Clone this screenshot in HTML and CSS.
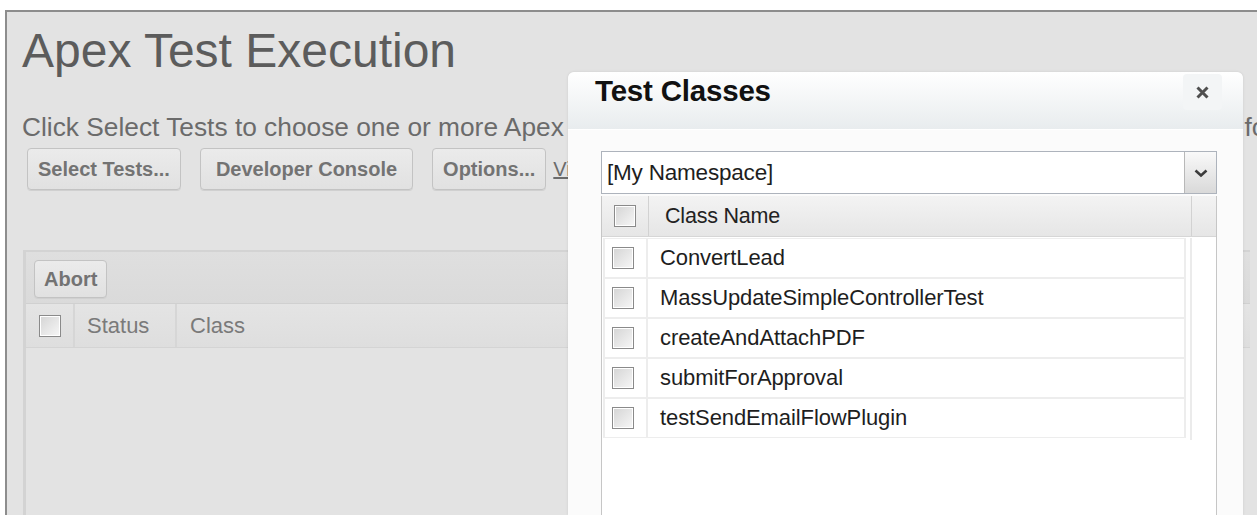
FILE: index.html
```html
<!DOCTYPE html>
<html lang="en">
<head>
<meta charset="utf-8">
<title>Apex Test Execution</title>
<link rel="stylesheet" href="styles.css">
</head>
<body>
  <div class="page">
    <h1 class="title">Apex Test Execution</h1>
    <p class="intro">Click Select Tests to choose one or more Apex unit test classes to run. To see the current code coverage for an individual class, go to the Apex Classes page.</p>
    <div class="actions">
      <button class="btn">Select Tests...</button>
      <button class="btn btn-wide">Developer Console</button>
      <button class="btn">Options...</button>
      <a class="link" href="#">View Test History</a>
    </div>

    <div class="grid">
      <div class="toolbar">
        <button class="btn btn-small">Abort</button>
      </div>
      <div class="grid-head">
        <div class="cell cell-check"><span class="checkbox"></span></div>
        <div class="cell cell-status">Status</div>
        <div class="cell cell-class">Class</div>
      </div>
    </div>
  </div>

  <div class="modal">
    <div class="modal-head">
      <h2 class="modal-title">Test Classes</h2>
      <button class="modal-close" aria-label="Close">
        <svg width="13" height="13" viewBox="0 0 13 13"><path d="M1.5 1.5 L11.5 11.5 M11.5 1.5 L1.5 11.5" stroke="#4f4f4f" stroke-width="3" fill="none"/></svg>
      </button>
    </div>
    <div class="modal-body">
      <div class="select">
        <span class="select-value">[My Namespace]</span>
        <span class="select-arrow">
          <svg width="14" height="10" viewBox="0 0 14 10"><path d="M1.5 2.5 L7 7.5 L12.5 2.5" fill="none" stroke="#3c3c3c" stroke-width="2.6"/></svg>
        </span>
      </div>
      <div class="list">
        <div class="list-head">
          <div class="lh-check"><span class="checkbox"></span></div>
          <div class="lh-name">Class Name</div>
          <div class="lh-gutter"></div>
        </div>
        <div class="list-body">
          <div class="rows">
            <div class="row"><div class="r-check"><span class="checkbox"></span></div><div class="r-name">ConvertLead</div></div>
            <div class="row"><div class="r-check"><span class="checkbox"></span></div><div class="r-name">MassUpdateSimpleControllerTest</div></div>
            <div class="row"><div class="r-check"><span class="checkbox"></span></div><div class="r-name">createAndAttachPDF</div></div>
            <div class="row"><div class="r-check"><span class="checkbox"></span></div><div class="r-name">submitForApproval</div></div>
            <div class="row"><div class="r-check"><span class="checkbox"></span></div><div class="r-name">testSendEmailFlowPlugin</div></div>
          </div>
          <div class="gutter"></div>
        </div>
      </div>
    </div>
  </div>
</body>
</html>
```

FILE: styles.css
```css
html, body {
  margin: 0;
  height: 515px;
  overflow: hidden;
  background: #ffffff;
  font-family: "Liberation Sans", Arial, Helvetica, sans-serif;
}

/* dimmed page behind the dialog */
.page {
  margin: 10px 0 0 5px;
  height: 503px;
  border-top: 2px solid #8d8d8d;
  border-left: 2px solid #8d8d8d;
  background: #e3e3e3;
  padding-left: 15px;
  overflow: hidden;
}

.title {
  margin: 11px 0 0;
  font-size: 48px;
  line-height: 55px;
  font-weight: normal;
  color: #5c5c5c;
}

.intro {
  margin: 34px 0 0;
  font-size: 26.3px;
  line-height: 30px;
  color: #6b6b6b;
  white-space: nowrap;
}

.actions {
  display: flex;
  align-items: center;
  gap: 19px;
  margin: 6px 0 0 5px;
}

.btn {
  height: 42px;
  padding: 0 10px;
  border: 1px solid #c3c3c3;
  border-radius: 4px;
  background: linear-gradient(#ebebeb, #e1e1e1);
  font-family: inherit;
  font-size: 20px;
  font-weight: bold;
  color: #737373;
  box-shadow: 0 1px 0 #d0d0d0;
}

.btn-wide {
  padding: 0 15px;
}

.link {
  margin-left: -12px;
  font-size: 20px;
  color: #6b6b6b;
  white-space: nowrap;
}

.grid {
  margin: 60px 7px 0 1px;
  height: 300px;
  border-top: 2px solid #d3d3d3;
  border-left: 3px solid #d3d3d3;
}

.toolbar {
  height: 52px;
  padding: 8px 0 0 8px;
  box-sizing: border-box;
  background: linear-gradient(#dfdfdf, #dadada);
  border-bottom: 1px solid #d0d0d0;
}

.btn-small {
  height: 38px;
  padding: 0 9px;
}

.grid-head {
  display: flex;
  height: 43px;
  background: linear-gradient(#e4e4e4, #dedede);
  border-bottom: 1px solid #d4d4d4;
  font-size: 22px;
  color: #7a7a7a;
}

.cell {
  display: flex;
  align-items: center;
  border-right: 2px solid #d6d6d6;
}

.cell-check { width: 47px; justify-content: center; }
.cell-status { width: 88px; padding-left: 12px; }
.cell-class { flex: 1; padding-left: 13px; border-right: 0; }

.checkbox {
  display: inline-block;
  width: 22px;
  height: 22px;
  box-sizing: border-box;
  border: 1px solid #8a8a8a;
  box-shadow: inset 0 0 0 1px #ffffff;
  background: linear-gradient(135deg, #d4d4d4, #f7f7f7);
}

/* dialog */
.modal {
  position: absolute;
  left: 568px;
  top: 72px;
  width: 675px;
  height: 443px;
  overflow: hidden;
  border-radius: 6px 6px 0 0;
  background: #fbfbfb;
  box-shadow: 0 0 3px rgba(0, 0, 0, 0.1);
}

.modal-head {
  display: flex;
  align-items: flex-start;
  justify-content: space-between;
  height: 57px;
  padding: 0 21px 0 27px;
  border-radius: 6px 6px 0 0;
  background: linear-gradient(#ffffff, #e8ecee);
  border-bottom: 1px solid #ffffff;
}

.modal-title {
  margin: 3px 0 0;
  font-size: 29.5px;
  line-height: 31px;
  font-weight: bold;
  color: #111111;
  letter-spacing: -0.2px;
}

.modal-close {
  display: flex;
  align-items: center;
  justify-content: center;
  width: 39px;
  height: 36px;
  margin-top: 2px;
  border: 0;
  border-radius: 4px;
  background: #f3f5f6;
  padding: 0;
}

.modal-body {
  padding: 21px 26px 0 33px;
}

.select {
  display: flex;
  height: 43px;
  box-sizing: border-box;
  border: 1px solid #adb3bc;
  background: #ffffff;
}

.select-value {
  flex: 1;
  display: flex;
  align-items: center;
  padding-left: 5px;
  font-size: 22.5px;
  color: #1e1e1e;
  letter-spacing: -0.2px;
}

.select-arrow {
  width: 31px;
  display: flex;
  align-items: center;
  justify-content: center;
  border-left: 1px solid #b8b8b8;
  background: linear-gradient(#f9f9f9, #d9d9d9);
}

.list {
  margin-top: 2px;
  height: 400px;
  border-left: 1px solid #c6c6c6;
  border-right: 1px solid #c6c6c6;
  background: #ffffff;
}

.list-head {
  display: flex;
  height: 40px;
  background: linear-gradient(#f3f3f3, #e6e6e6);
  border-bottom: 1px solid #d6d6d6;
  font-size: 21.5px;
  color: #222222;
  letter-spacing: -0.2px;
}

.lh-check {
  width: 46px;
  display: flex;
  align-items: center;
  justify-content: center;
  border-right: 1px solid #d2d2d2;
}

.lh-name {
  flex: 1;
  display: flex;
  align-items: center;
  padding-left: 16px;
}

.lh-gutter {
  width: 24px;
  border-left: 1px solid #d2d2d2;
}

.list-body {
  display: flex;
  padding-top: 1px;
}

.rows {
  flex: 1;
  display: flex;
  flex-direction: column;
  padding-left: 1px;
}

.row {
  display: flex;
  height: 40px;
  box-sizing: border-box;
  border: 2px solid #ededed;
  border-top-width: 1px;
  border-bottom-width: 1px;
  background: #ffffff;
}

.r-check {
  width: 43px;
  display: flex;
  align-items: center;
  padding-left: 7px;
  box-sizing: border-box;
  border-right: 2px solid #ededed;
}

.r-name {
  flex: 1;
  display: flex;
  align-items: center;
  padding-left: 12px;
  font-size: 22px;
  color: #1e1e1e;
  letter-spacing: -0.1px;
}

.gutter {
  width: 26px;
  height: 202px;
  box-sizing: border-box;
  border-left: 2px solid #ebebeb;
  margin-left: 4px;
}
```
